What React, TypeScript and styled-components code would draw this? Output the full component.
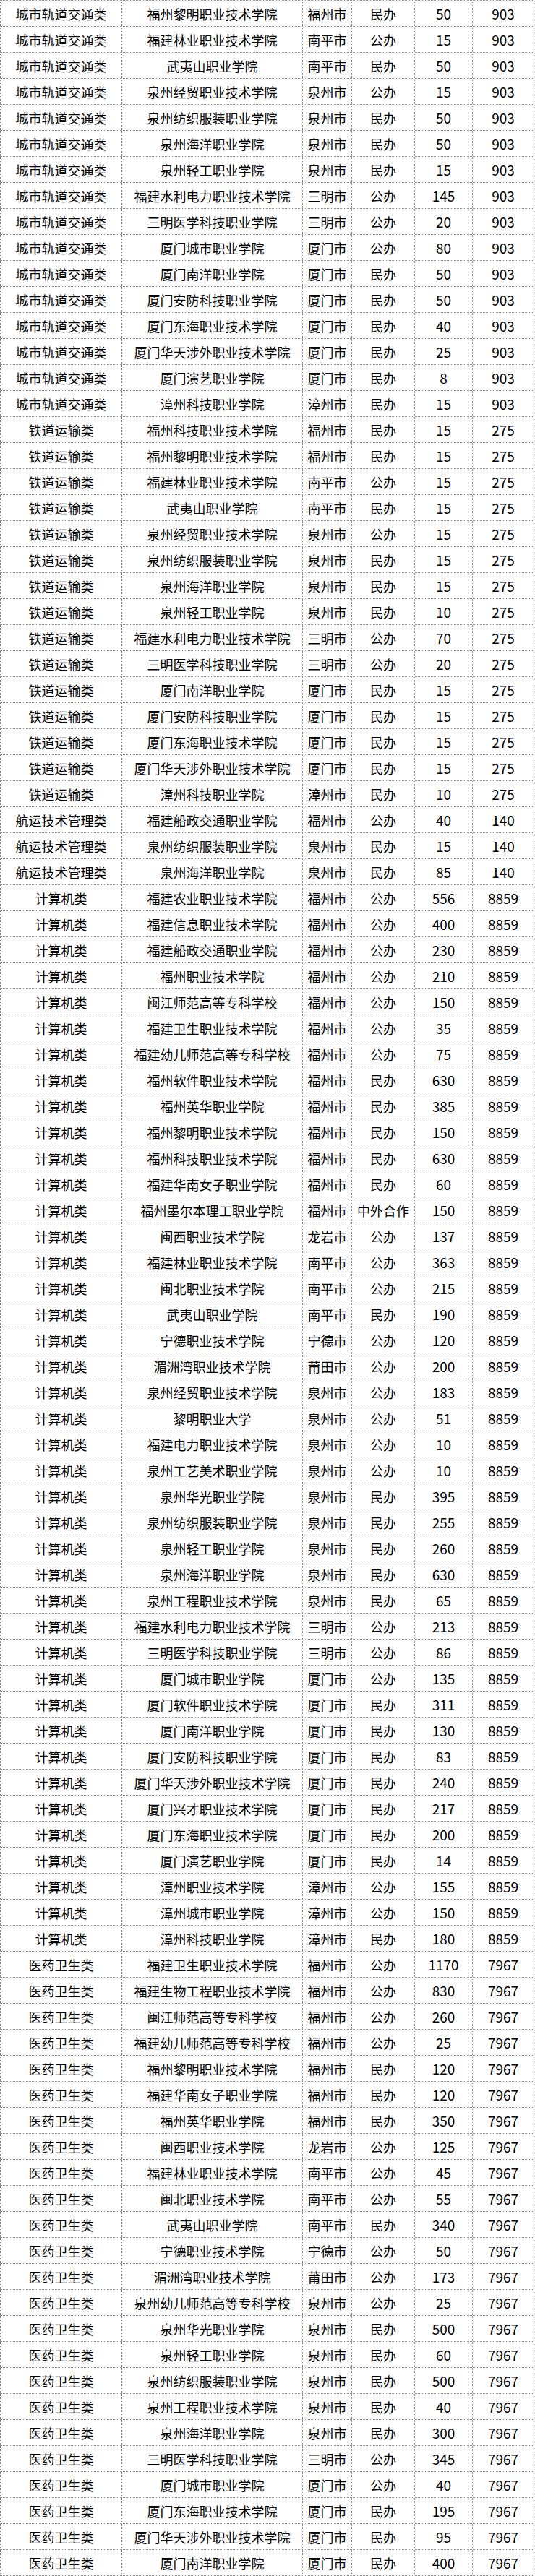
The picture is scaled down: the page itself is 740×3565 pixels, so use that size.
import React from "react";
import styled, { createGlobalStyle } from "styled-components";

const GlobalStyle = createGlobalStyle`
  html, body {
    margin: 0;
    padding: 0;
    background: #ffffff;
  }
  body {
    font-family: "Noto Sans CJK SC", "Noto Sans", sans-serif;
    color: #000;
  }
`;

type Group = { category: string; total: string; rows: string[] };

const groups: Group[] = [
  {
    category: "城市轨道交通类",
    total: "903",
    rows: [
      "福州黎明职业技术学院|福州市|民办|50",
      "福建林业职业技术学院|南平市|公办|15",
      "武夷山职业学院|南平市|民办|50",
      "泉州经贸职业技术学院|泉州市|公办|15",
      "泉州纺织服装职业学院|泉州市|民办|50",
      "泉州海洋职业学院|泉州市|民办|50",
      "泉州轻工职业学院|泉州市|民办|15",
      "福建水利电力职业技术学院|三明市|公办|145",
      "三明医学科技职业学院|三明市|公办|20",
      "厦门城市职业学院|厦门市|公办|80",
      "厦门南洋职业学院|厦门市|民办|50",
      "厦门安防科技职业学院|厦门市|民办|50",
      "厦门东海职业技术学院|厦门市|民办|40",
      "厦门华天涉外职业技术学院|厦门市|民办|25",
      "厦门演艺职业学院|厦门市|民办|8",
      "漳州科技职业学院|漳州市|民办|15",
    ],
  },
  {
    category: "铁道运输类",
    total: "275",
    rows: [
      "福州科技职业技术学院|福州市|民办|15",
      "福州黎明职业技术学院|福州市|民办|15",
      "福建林业职业技术学院|南平市|公办|15",
      "武夷山职业学院|南平市|民办|15",
      "泉州经贸职业技术学院|泉州市|公办|15",
      "泉州纺织服装职业学院|泉州市|民办|15",
      "泉州海洋职业学院|泉州市|民办|15",
      "泉州轻工职业学院|泉州市|民办|10",
      "福建水利电力职业技术学院|三明市|公办|70",
      "三明医学科技职业学院|三明市|公办|20",
      "厦门南洋职业学院|厦门市|民办|15",
      "厦门安防科技职业学院|厦门市|民办|15",
      "厦门东海职业技术学院|厦门市|民办|15",
      "厦门华天涉外职业技术学院|厦门市|民办|15",
      "漳州科技职业学院|漳州市|民办|10",
    ],
  },
  {
    category: "航运技术管理类",
    total: "140",
    rows: [
      "福建船政交通职业学院|福州市|公办|40",
      "泉州纺织服装职业学院|泉州市|民办|15",
      "泉州海洋职业学院|泉州市|民办|85",
    ],
  },
  {
    category: "计算机类",
    total: "8859",
    rows: [
      "福建农业职业技术学院|福州市|公办|556",
      "福建信息职业技术学院|福州市|公办|400",
      "福建船政交通职业学院|福州市|公办|230",
      "福州职业技术学院|福州市|公办|210",
      "闽江师范高等专科学校|福州市|公办|150",
      "福建卫生职业技术学院|福州市|公办|35",
      "福建幼儿师范高等专科学校|福州市|公办|75",
      "福州软件职业技术学院|福州市|民办|630",
      "福州英华职业学院|福州市|民办|385",
      "福州黎明职业技术学院|福州市|民办|150",
      "福州科技职业技术学院|福州市|民办|630",
      "福建华南女子职业学院|福州市|民办|60",
      "福州墨尔本理工职业学院|福州市|中外合作|150",
      "闽西职业技术学院|龙岩市|公办|137",
      "福建林业职业技术学院|南平市|公办|363",
      "闽北职业技术学院|南平市|公办|215",
      "武夷山职业学院|南平市|民办|190",
      "宁德职业技术学院|宁德市|公办|120",
      "湄洲湾职业技术学院|莆田市|公办|200",
      "泉州经贸职业技术学院|泉州市|公办|183",
      "黎明职业大学|泉州市|公办|51",
      "福建电力职业技术学院|泉州市|公办|10",
      "泉州工艺美术职业学院|泉州市|公办|10",
      "泉州华光职业学院|泉州市|民办|395",
      "泉州纺织服装职业学院|泉州市|民办|255",
      "泉州轻工职业学院|泉州市|民办|260",
      "泉州海洋职业学院|泉州市|民办|630",
      "泉州工程职业技术学院|泉州市|民办|65",
      "福建水利电力职业技术学院|三明市|公办|213",
      "三明医学科技职业学院|三明市|公办|86",
      "厦门城市职业学院|厦门市|公办|135",
      "厦门软件职业技术学院|厦门市|民办|311",
      "厦门南洋职业学院|厦门市|民办|130",
      "厦门安防科技职业学院|厦门市|民办|83",
      "厦门华天涉外职业技术学院|厦门市|民办|240",
      "厦门兴才职业技术学院|厦门市|民办|217",
      "厦门东海职业技术学院|厦门市|民办|200",
      "厦门演艺职业学院|厦门市|民办|14",
      "漳州职业技术学院|漳州市|公办|155",
      "漳州城市职业学院|漳州市|公办|150",
      "漳州科技职业学院|漳州市|民办|180",
    ],
  },
  {
    category: "医药卫生类",
    total: "7967",
    rows: [
      "福建卫生职业技术学院|福州市|公办|1170",
      "福建生物工程职业技术学院|福州市|公办|830",
      "闽江师范高等专科学校|福州市|公办|260",
      "福建幼儿师范高等专科学校|福州市|公办|25",
      "福州黎明职业技术学院|福州市|民办|120",
      "福建华南女子职业学院|福州市|民办|120",
      "福州英华职业学院|福州市|民办|350",
      "闽西职业技术学院|龙岩市|公办|125",
      "福建林业职业技术学院|南平市|公办|45",
      "闽北职业技术学院|南平市|公办|55",
      "武夷山职业学院|南平市|民办|340",
      "宁德职业技术学院|宁德市|公办|50",
      "湄洲湾职业技术学院|莆田市|公办|173",
      "泉州幼儿师范高等专科学校|泉州市|公办|25",
      "泉州华光职业学院|泉州市|民办|500",
      "泉州轻工职业学院|泉州市|民办|60",
      "泉州纺织服装职业学院|泉州市|民办|500",
      "泉州工程职业技术学院|泉州市|民办|40",
      "泉州海洋职业学院|泉州市|民办|300",
      "三明医学科技职业学院|三明市|公办|345",
      "厦门城市职业学院|厦门市|公办|40",
      "厦门东海职业技术学院|厦门市|民办|195",
      "厦门华天涉外职业技术学院|厦门市|民办|95",
      "厦门南洋职业学院|厦门市|民办|400",
    ],
  },
];

const BORDER = "1px dotted #8a8a8a";

const Table = styled.div`
  width: 739px;
  display: flex;
  flex-direction: column;
  font-family: "Noto Sans CJK SC", "Noto Sans", sans-serif;
  font-size: 18px;
  color: #000;
`;

const Row = styled.div<{ $last?: boolean }>`
  display: grid;
  grid-template-columns: 168px 250px 68px 87px 80px 86px;
  height: 35px;
  border-top: ${BORDER};
  border-bottom: ${(p) => (p.$last ? BORDER : "none")};
`;

const Cell = styled.div<{ $end?: boolean }>`
  box-sizing: border-box;
  display: flex;
  align-items: center;
  justify-content: center;
  border-left: ${BORDER};
  border-right: ${(p) => (p.$end ? BORDER : "none")};
  white-space: nowrap;
  line-height: 1;
  overflow: visible;
`;

const NumCell = styled(Cell)`
  font-size: 19px;
  font-variant-numeric: lining-nums;
`;

export default function App() {
  const flat: { category: string; total: string; cols: string[] }[] = [];
  groups.forEach((g) =>
    g.rows.forEach((r) => flat.push({ category: g.category, total: g.total, cols: r.split("|") }))
  );
  return (
    <>
      <GlobalStyle />
      <Table>
        {flat.map((row, i) => (
          <Row key={i} $last={i === flat.length - 1}>
            <Cell>{row.category}</Cell>
            <Cell>{row.cols[0]}</Cell>
            <Cell>{row.cols[1]}</Cell>
            <Cell>{row.cols[2]}</Cell>
            <NumCell>{row.cols[3]}</NumCell>
            <NumCell $end>{row.total}</NumCell>
          </Row>
        ))}
      </Table>
    </>
  );
}
